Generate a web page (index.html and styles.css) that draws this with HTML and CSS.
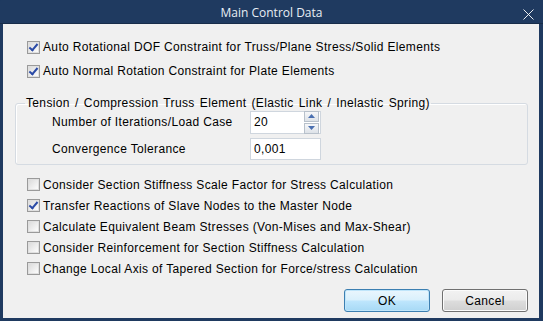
FILE: index.html
```html
<!DOCTYPE html>
<html>
<head>
<meta charset="utf-8">
<link rel="stylesheet" href="styles.css">
</head>
<body>
<div class="window">
  <div class="titlebar">
    <span class="title">Main Control Data</span>
    <svg class="close" width="11" height="11" viewBox="0 0 11 11"><path d="M0.5 0.5 L10.5 10.5 M10.5 0.5 L0.5 10.5" stroke="#ffffff" stroke-width="0.9" fill="none"/></svg>
  </div>
  <div class="content">
    <div class="top-rows">
      <label class="row"><span class="cb checked"></span>Auto Rotational DOF Constraint for Truss/Plane Stress/Solid Elements</label>
      <label class="row"><span class="cb checked"></span>Auto Normal Rotation Constraint for Plate Elements</label>
    </div>
    <fieldset class="group">
      <legend>Tension / Compression Truss Element (Elastic Link / Inelastic Spring)</legend>
      <div class="field">
        <span class="flabel">Number of Iterations/Load Case</span>
        <div class="input spin">
          <span class="val">20</span>
          <div class="spinbtns">
            <span class="sbtn"><svg width="7" height="4" viewBox="0 0 7 4"><path d="M3.5 0 L7 4 L0 4 Z" fill="#4a6fb0"/></svg></span>
            <span class="sbtn"><svg width="7" height="4" viewBox="0 0 7 4"><path d="M0 0 L7 0 L3.5 4 Z" fill="#4a6fb0"/></svg></span>
          </div>
        </div>
      </div>
      <div class="field">
        <span class="flabel">Convergence Tolerance</span>
        <div class="input"><span class="val">0,001</span></div>
      </div>
    </fieldset>
    <div class="bottom-rows">
      <label class="row"><span class="cb"></span>Consider Section Stiffness Scale Factor for Stress Calculation</label>
      <label class="row"><span class="cb checked"></span>Transfer Reactions of Slave Nodes to the Master Node</label>
      <label class="row"><span class="cb"></span>Calculate Equivalent Beam Stresses (Von-Mises and Max-Shear)</label>
      <label class="row"><span class="cb"></span>Consider Reinforcement for Section Stiffness Calculation</label>
      <label class="row"><span class="cb"></span>Change Local Axis of Tapered Section for Force/stress Calculation</label>
    </div>
    <div class="buttons">
      <button class="btn default">OK</button>
      <button class="btn">Cancel</button>
    </div>
  </div>
</div>
</body>
</html>
```

FILE: styles.css
```css
html, body {
  margin: 0;
  padding: 0;
  width: 543px;
  height: 321px;
  overflow: hidden;
  background: #1f3a60;
}
.window {
  width: 543px;
  height: 321px;
  box-sizing: border-box;
  background: #1f3a60;
  border-radius: 2px 2px 0 0;
  display: flex;
  flex-direction: column;
  font-family: "Liberation Sans", Arial, sans-serif;
  font-size: 12px;
  letter-spacing: 0.35px;
  color: #000;
}
.titlebar {
  height: 23px;
  border-bottom: 1px solid #172c49;
  display: flex;
  align-items: center;
  justify-content: center;
  position: relative;
  letter-spacing: 0;
}
.title {
  font-family: "Open Sans", "Noto Sans", sans-serif;
  font-size: 12px;
  color: #e8eef5;
  margin-top: 2px;
}
.close {
  position: absolute;
  right: 9px;
  top: 9px;
}
.content {
  flex: 1;
  margin: 0 4px 3px 3px;
  background: #f0f0f0;
  padding: 13px 11px 0 12px;
  display: flex;
  flex-direction: column;
}
.top-rows {
  display: flex;
  flex-direction: column;
  gap: 4px;
  padding-left: 12px;
}
.row {
  display: flex;
  align-items: center;
  height: 20px;
  white-space: nowrap;
}
.bottom-rows {
  display: flex;
  flex-direction: column;
  margin-top: 9px;
  padding-left: 12px;
}
.bottom-rows .row {
  height: 21px;
}
.cb {
  width: 11px;
  height: 11px;
  border: 1px solid #9a9a9a;
  background: linear-gradient(135deg, #d8d8d8 0%, #f4f4f4 70%, #ffffff 100%);
  margin-right: 3px;
  flex: none;
  position: relative;
  box-shadow: inset 0 0 0 1px #e0e0e0;
}
.cb.checked::after {
  content: "";
  position: absolute;
  left: 3px;
  top: 0px;
  width: 3px;
  height: 7px;
  border-right: 2px solid #2a4aa6;
  border-bottom: 2px solid #2a4aa6;
  transform: rotate(40deg);
}
.group {
  margin: 15px 0 0 0;
  padding: 0 0 4px 0;
  border: 1px solid #d5dbe2;
  border-radius: 3px;
  box-shadow: inset 1px 1px 0 #ffffff;
  height: 69px;
  box-sizing: border-box;
  position: relative;
  width: 513px;
}
.group legend {
  padding: 0 1px;
  margin-left: 9px;
  line-height: 14px;
  white-space: nowrap;
  word-spacing: 1.5px;
}
.field {
  display: flex;
  align-items: center;
  padding-left: 36px;
  height: 24px;
}
.field + .field {
  margin-top: 3px;
}
.flabel {
  width: 198px;
}
.input {
  width: 66px;
  height: 20px;
  border: 1px solid #cfd6de;
  background: #ffffff;
  display: flex;
  align-items: center;
  padding-left: 3px;
  box-sizing: content-box;
  position: relative;
}
.spin {
  height: 21px;
}
.val {
  flex: 1;
  font-size: 12px;
}
.spinbtns {
  display: flex;
  flex-direction: column;
  gap: 1px;
  margin-right: 1px;
}
.sbtn {
  width: 13px;
  height: 9px;
  border: 1px solid #b8c1cb;
  background: linear-gradient(#f6f7f9, #dde2e8);
  display: flex;
  align-items: center;
  justify-content: center;
  box-sizing: content-box;
}
.buttons {
  display: flex;
  justify-content: flex-end;
  gap: 12px;
  margin-top: 10px;
}
.btn {
  width: 86px;
  height: 23px;
  font-family: "Liberation Sans", Arial, sans-serif;
  font-size: 12px;
  letter-spacing: 0.35px;
  color: #000;
  border: 1px solid #707070;
  border-radius: 3px;
  background: linear-gradient(#f2f2f2 0%, #ebebeb 48%, #dddddd 52%, #cfcfcf 100%);
  box-shadow: inset 0 0 0 1px #fbfbfb;
  padding: 0;
}
.btn.default {
  border-color: #3c7fb1;
  background: linear-gradient(#eaf6fd 0%, #d9f0fc 48%, #bee6fd 52%, #a7d9f5 100%);
  box-shadow: inset 0 0 0 1px #bfe5fa;
}
```
